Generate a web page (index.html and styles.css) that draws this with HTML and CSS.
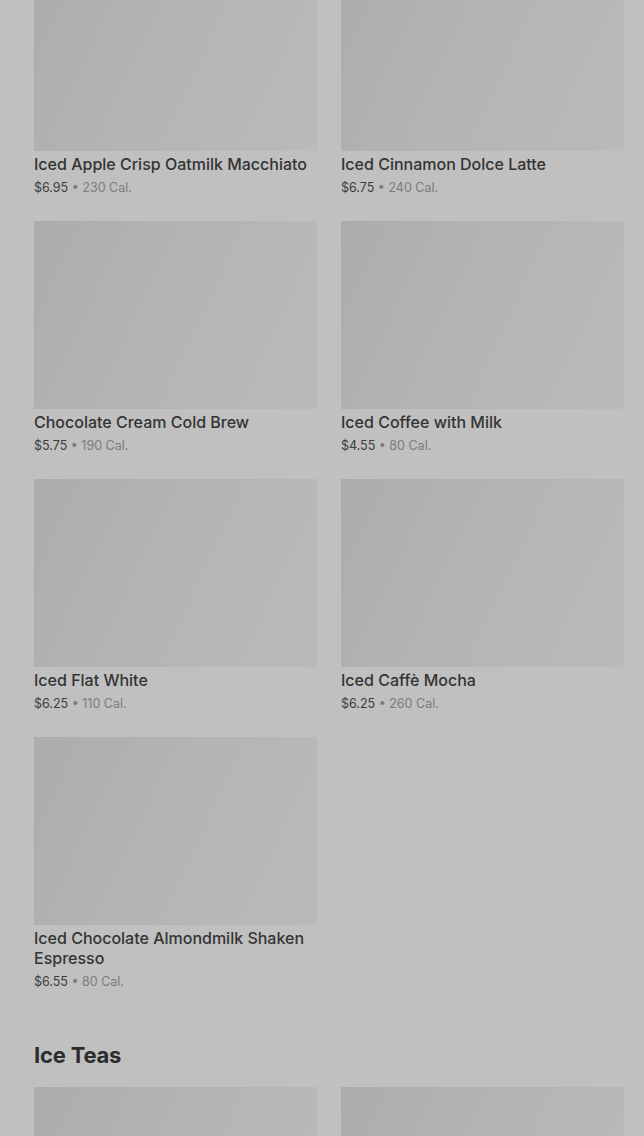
FILE: index.html
```html
<!DOCTYPE html>
<html lang="en">
<head>
  <meta charset="UTF-8">
  <meta name="viewport" content="width=device-width, initial-scale=1.0">
  <title>Menu</title>
  <link rel="stylesheet" href="styles.css">
</head>
<body>
<div class="page">
  <div class="grid">
    <div class="item">
      <div class="thumb"></div>
      <div class="name">Iced Apple Crisp Oatmilk Macchiato</div>
      <div class="meta"><span class="price">$6.95</span> • 230 Cal.</div>
    </div>
    <div class="item">
      <div class="thumb"></div>
      <div class="name">Iced Cinnamon Dolce Latte</div>
      <div class="meta"><span class="price">$6.75</span> • 240 Cal.</div>
    </div>
    <div class="item">
      <div class="thumb"></div>
      <div class="name">Chocolate Cream Cold Brew</div>
      <div class="meta"><span class="price">$5.75</span> • 190 Cal.</div>
    </div>
    <div class="item">
      <div class="thumb"></div>
      <div class="name">Iced Coffee with Milk</div>
      <div class="meta"><span class="price">$4.55</span> • 80 Cal.</div>
    </div>
    <div class="item">
      <div class="thumb"></div>
      <div class="name">Iced Flat White</div>
      <div class="meta"><span class="price">$6.25</span> • 110 Cal.</div>
    </div>
    <div class="item">
      <div class="thumb"></div>
      <div class="name">Iced Caffè Mocha</div>
      <div class="meta"><span class="price">$6.25</span> • 260 Cal.</div>
    </div>
    <div class="item">
      <div class="thumb"></div>
      <div class="name">Iced Chocolate Almondmilk Shaken Espresso</div>
      <div class="meta"><span class="price">$6.55</span> • 80 Cal.</div>
    </div>
  </div>

  <h2 class="section-title">Ice Teas</h2>
  <div class="grid">
    <div class="item">
      <div class="thumb"></div>
    </div>
    <div class="item">
      <div class="thumb"></div>
    </div>
  </div>
</div>
</body>
</html>
```

FILE: styles.css
```css
html, body {
  margin: 0;
  padding: 0;
  background: #c0c0c0;
  overflow: hidden;
}
body {
  font-family: Inter, "Liberation Sans", sans-serif;
  color: #333;
}
.page {
  margin-top: -37px;
  padding: 0 20px 0 34px;
}
.grid {
  display: grid;
  grid-template-columns: 283px 283px;
  column-gap: 24px;
  row-gap: 23px;
}
.thumb {
  height: 188px;
  background: linear-gradient(115deg, #acacac 0%, #b4b4b4 45%, #bababa 100%);
}
.name {
  margin-top: 3px;
  font-size: 16px;
  line-height: 20px;
  font-weight: 500;
  color: #343434;
}
.meta {
  margin-top: 4px;
  font-size: 12.5px;
  line-height: 20px;
  color: #7c7c7c;
}
.price {
  color: #3c3c3c;
}
.section-title {
  margin: 47px 0 16px;
  font-size: 22px;
  line-height: 32px;
  font-weight: 700;
  letter-spacing: -0.2px;
  color: #2c2c2c;
}
```
